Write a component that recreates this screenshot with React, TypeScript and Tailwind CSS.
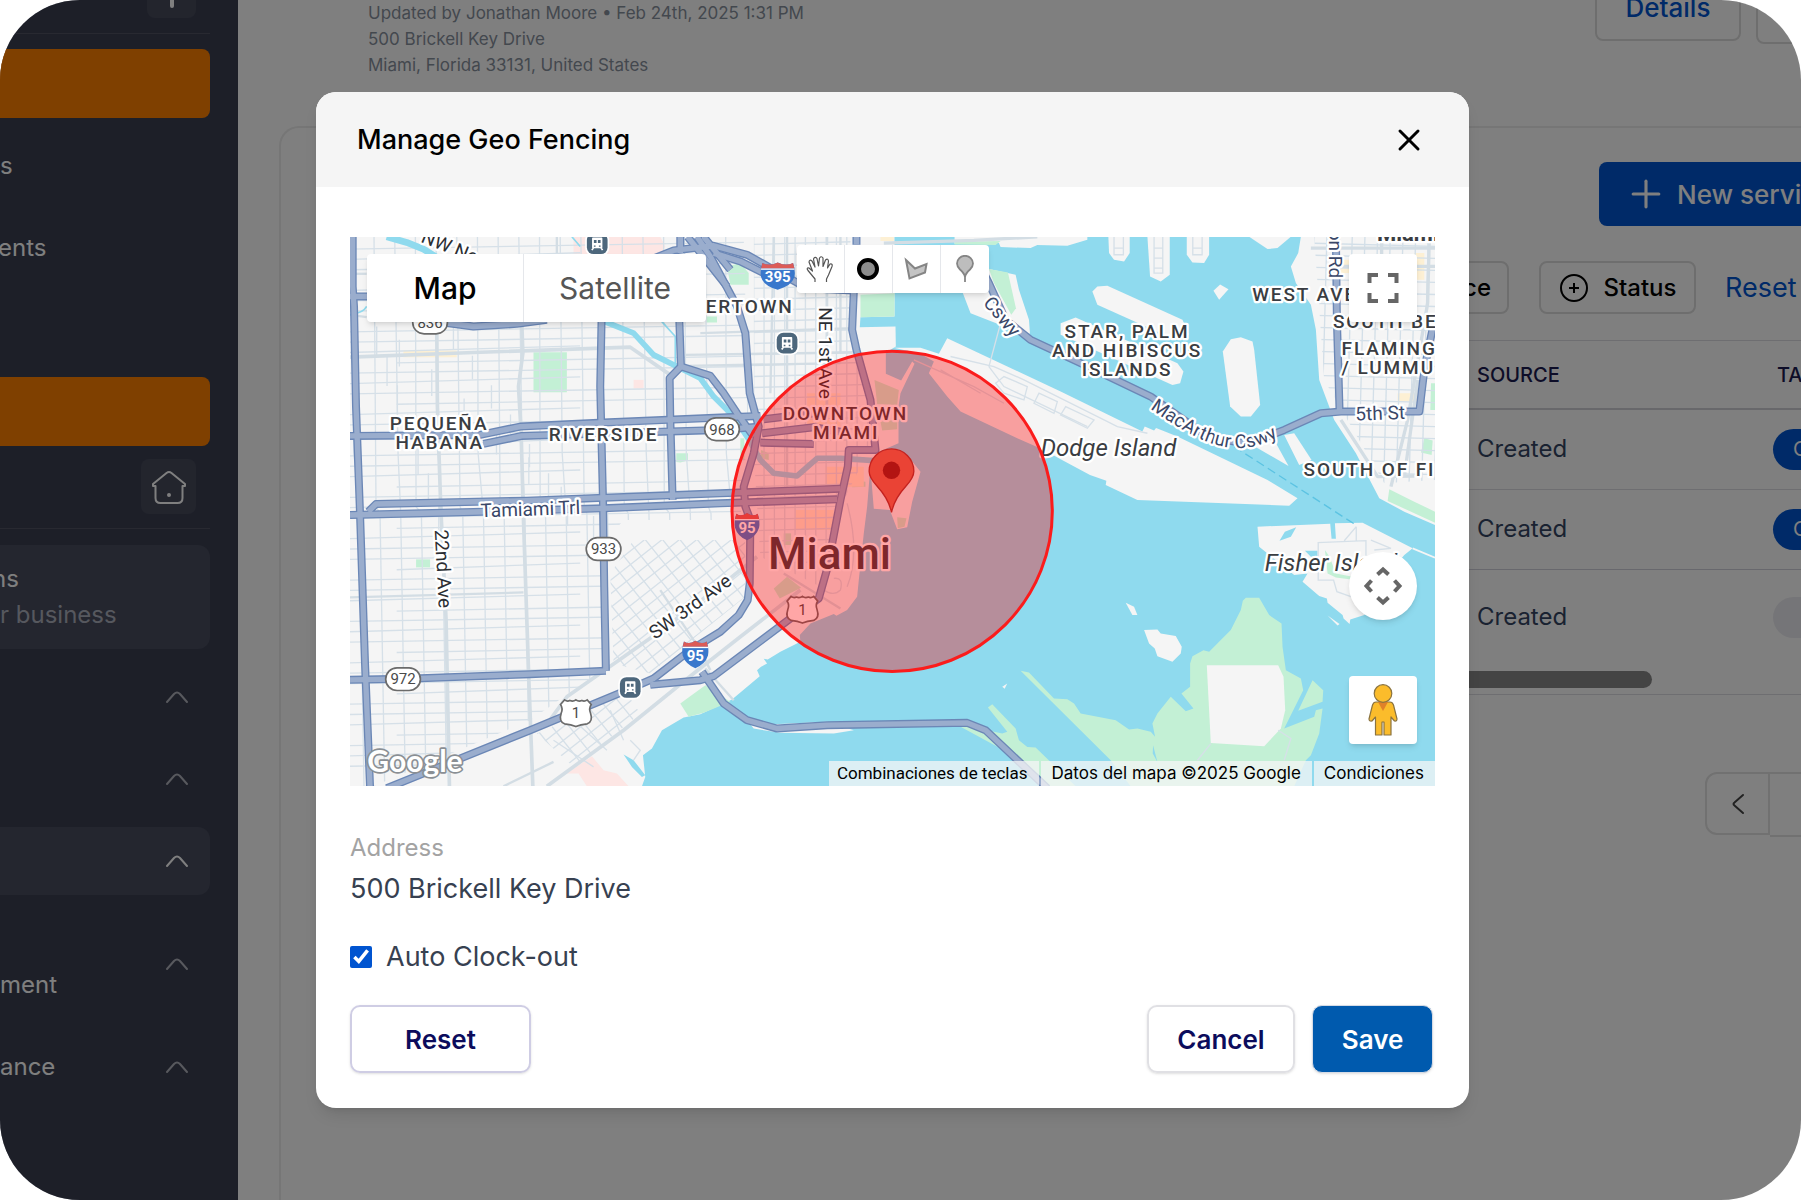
import { useState } from "react";
import { Plus, X } from "lucide-react";

// map drawing units: three per pixel
const MAINLAND =
  "M30 51 H1662 V290 L1560 292 L1558 322 L1665 320 L1666 380 L1636 398 V462 L1682 482 L1715 425 L1722 432 L1680 520 L1674 560 V670 L1610 698 L1590 735 L1580 860 L1570 940 L1555 1080 L1550 1130 L1520 1170 L1488 1187 L1480 1182 L1410 1210 L1378 1245 L1380 1265 L1320 1295 L1282 1318 L1270 1316 L1280 1330 L1262 1340 L1250 1350 L1258 1368 L1175 1438 L1080 1482 L1030 1492 L965 1530 L935 1585 L908 1605 L915 1670 L905 1698 H30 Z";

const ISLANDS = [
  // causeway and watson island
  "M1842 51 H2240 V60 L2180 78 L2090 76 L2070 85 L1980 82 L1975 70 L1842 72 Z",
  "M1850 150 L1945 148 L2025 165 L2035 210 L2065 300 L2068 342 L2030 335 L1890 280 L1865 215 Z",
  // port and dodge island
  "M1660 384 L1740 384 L1795 402 L1820 355 L2160 515 L2405 635 L2412 620 L2440 632 L2446 624 L2510 650 L2780 780 L2870 835 L2845 857 L2390 840 L2295 795 L2297 782 L2248 765 L2160 718 L2110 690 L2030 655 L1860 575 L1820 530 L1765 460 L1780 425 L1740 402 Z",
  // venetian islands
  "M2303 51 H2367 V100 L2350 125 L2320 120 L2305 100 Z",
  "M2420 51 H2487 V165 L2460 185 L2428 170 Z",
  "M2538 51 H2605 V105 L2590 130 L2555 128 L2538 105 Z",
  "M2725 51 H2850 L2810 85 L2780 88 Z",
  "M2255 215 L2270 200 L2300 198 L2525 300 L2545 345 L2470 345 L2270 255 Z",
  "M2160 310 L2205 293 L2510 430 L2528 455 L2518 490 L2495 495 L2160 345 Z",
  "M2646 395 L2670 358 L2700 352 L2735 365 L2740 390 L2758 555 L2730 590 L2700 590 L2668 560 Z",
  "M2618 213 L2638 194 L2663 208 L2635 240 Z",
  // miami beach
  "M2880 51 L2872 100 L2850 140 L2865 190 L2910 255 L2925 330 L2935 480 L2980 600 L3045 700 L3115 835 L3190 875 L3282 915 V51 Z",
  "M2690 650 L2800 660 L2843 738 Z",
  "M2830 645 L2860 640 L2912 720 L2875 735 Z",
  // fisher island
  "M2750 920 L2968 911 L2972 956 L2985 956 L2982 910 L3065 908 L3215 985 L3190 1005 L3160 1040 L3070 1185 L3028 1198 L3026 1212 L3008 1195 L3005 1185 L2960 1148 L2958 1135 L2935 1128 L2885 1085 L2900 1060 L2860 1065 L2755 980 Z",
  "M2960 1186 L2996 1212 L2990 1216 Z",
  // sand bars
  "M2355 1148 L2380 1160 L2390 1185 L2375 1185 Z",
  "M2410 1230 L2450 1228 L2460 1240 L2505 1248 L2523 1280 L2520 1300 L2495 1325 L2450 1308 L2442 1285 L2425 1270 Z",
  "M1985 1400 L2000 1390 L1992 1406 Z",
  "M1220 1500 L1300 1512 L1460 1505 L1540 1530 L1480 1540 L1320 1538 L1240 1525 Z",
  // brickell key
  "M1590 745 L1650 720 L1705 712 L1740 755 L1715 845 L1700 922 L1670 928 L1648 870 L1600 866 Z",
];

const PARKS = [
  "M580 397 H680 V517 H580 Z",
  "M1008 700 H1043 V722 L1020 728 L1008 726 Z",
  "M228 1018 H270 V1042 H228 Z",
  "M1020 1450 L1095 1395 L1170 1445 L1090 1478 L1045 1490 Z",
  "M1160 140 L1200 130 L1225 160 L1225 195 L1170 195 Z",
  "M1560 225 L1662 220 V290 L1560 292 Z",
  "M1098 290 H1130 V308 H1098 Z",
  "M1945 148 L2002 158 L2026 265 L2012 285 L1960 190 Z",
  "M1842 66 L1980 64 L1965 76 L1842 74 Z",
  "M1602 480 L1675 510 L1670 555 L1610 552 Z",
  "M1620 605 L1670 600 V628 L1625 632 Z",
  "M1300 1105 L1340 1070 L1382 1103 L1318 1135 Z",
  "M1535 780 L1575 785 V800 L1535 802 Z",
  "M1670 892 L1698 895 L1692 920 L1672 925 Z",
  "M1330 940 H1352 V975 H1330 Z",
  "M1262 690 L1285 700 L1285 720 L1262 715 Z",
  "M1200 655 H1212 V720 H1200 Z",
  "M3145 808 L3220 845 L3282 875 V908 L3140 843 Z",
  "M3250 655 L3275 662 L3272 705 L3240 698 Z",
  "M3270 490 H3282 V570 H3268 Z",
  "M2952 990 L2966 1010 L2985 1060 L3035 1070 L3030 1078 L2985 1072 L2960 1060 Z",
  // virginia key
  "M2715 1133 L2755 1133 L2785 1185 L2822 1210 L2825 1280 L2835 1350 L2880 1375 L2887 1410 L2830 1525 L2920 1490 L2925 1470 L2945 1465 L2935 1540 L2910 1605 L2895 1620 L2860 1698 H2370 L2310 1620 L2040 1352 L2065 1357 L2140 1435 L2180 1437 L2200 1450 L2220 1480 L2325 1500 L2365 1528 L2390 1525 L2430 1535 L2443 1550 L2435 1510 L2450 1480 L2490 1430 L2535 1473 L2558 1465 L2522 1420 L2548 1400 V1330 L2555 1308 L2588 1290 L2605 1295 L2670 1230 L2700 1170 L2706 1142 Z",
  "M2915 1380 L2947 1410 L2945 1445 L2872 1472 Z",
  "M1942 1462 L1955 1452 L2025 1525 L2035 1560 L2060 1580 L2085 1582 L2205 1698 H2130 L1980 1585 L1860 1520 L1872 1516 L1985 1540 L2000 1535 Z",
];

const BUSINESS = [
  "M190 392 H350 V412 H190 Z",
  "M1365 870 H1480 V930 H1365 Z",
  "M1400 520 H1500 V620 H1400 Z",
  "M1455 740 H1570 V800 H1455 Z",
  "M3000 120 H3090 V160 H3000 Z",
  "M3220 100 H3250 V180 H3220 Z",
  "M3170 520 H3240 V545 H3170 Z",
  "M1620 51 H1660 V64 H1620 Z",
];

const HOSPITAL = ["M700 51 H960 L975 80 L960 105 H700 Z", "M880 480 H910 V506 H880 Z", "M680 1660 L755 1608 L790 1650 L830 1660 L865 1698 H740 L715 1660 Z"];

const STREETS = [
  "M30 412 L400 398 L870 382 L990 465",
  "M290 320 L292 560 L302 860 L318 1200 L328 1698",
  "M545 310 L548 400 L535 500 L543 640 L550 900 L565 1350 L578 1698",
  "M30 1132 L550 1117",
  "M1080 340 L1540 325",
  "M1035 405 L1540 398",
  "M1035 438 L1500 430",
  "M1300 51 L1290 520",
  "M1340 51 L1340 800",
  "M1460 51 V560",
  "M1500 51 V400",
  "M30 162 H80",
  "M30 285 L80 292",
  "M650 51 V100",
  "M630 1498 L680 1430 L950 1240 L1150 1090 L1250 1010",
  "M620 1698 L850 1530 L1060 1360 L1200 1250 L1380 1110",
  "M490 1698 L640 1625",
  "M1330 1060 L1500 1165",
  "M1095 1345 L1180 1440",
  "M960 1110 L1080 1290 L1110 1350",
];

const BEACH_STREETS = [
  "M3000 600 L3110 770 L3220 768",
  "M3265 51 L3260 250 L3200 600 L3150 800",
  "M3122 51 V300",
  "M3230 480 L3190 770",
  "M2910 85 H3282",
  "M2985 140 H3282",
  "M1630 70 L1900 62 L2090 51",
];

const ROADS = [
  "M38 51 V200 L42 260 L48 560 L60 880 L75 1330 L90 1698",
  "M30 230 H90",
  "M310 308 L400 320 L530 312 L620 300",
  "M930 120 L1000 92 L1120 78 L1220 105 L1300 150 L1400 205 L1540 212",
  "M1020 51 V100 M1042 51 L1160 200 M1090 51 L1170 150",
  "M1120 100 L1200 125 L1280 165",
  "M784 300 L780 500 L788 830 L792 1100 L797 1352",
  "M1017 300 L1022 440 L988 475 L990 600 L997 840",
  "M30 648 L420 645 L540 620 L790 608 L1140 593 L1260 588",
  "M430 672 L545 648 L1140 630 L1260 620",
  "M1270 598 L1420 580",
  "M1265 640 L1420 622 L1525 640",
  "M1260 668 L1420 672",
  "M85 875 L108 852 L560 842 L1140 820 L1500 806",
  "M30 885 L400 876 L790 865 L1140 850 L1490 838",
  "M1022 440 L1110 468 L1150 520 L1190 580 L1240 650",
  "M1070 51 L1110 110 L1190 260 L1215 340 L1228 520 L1255 620 L1240 700 L1210 800 L1215 860 L1230 900 L1228 1090 L1222 1140 L1195 1185 L1140 1235 L1050 1290 L940 1375 L860 1410 L570 1530 L140 1704",
  "M1548 51 V75 M1540 215 L1535 330 L1548 390 L1590 540 L1605 690 L1525 690 L1522 740 L1500 840 L1462 1040 L1435 1135 L1350 1195 L1120 1368 L1080 1380 L930 1394",
  "M1085 1355 L1150 1450 L1220 1500 L1310 1525 L1460 1515 L1880 1508 L1935 1530 L2120 1704",
  "M30 1379 L200 1376 L570 1362 L797 1352",
  "M1925 150 L1945 190 L1995 300 L2070 360 L2220 430 L2430 530 L2600 650 L2720 672 L2830 630 L2940 580 L3000 575 L3235 575 L3250 450 L3282 290",
  "M2985 51 L2988 300 L2996 575",
];

const WIDE_STREETS = new Set([0, 1, 2, 14, 15]);

const range = (from: number, to: number, step: number) => {
  const out: number[] = [];
  for (let n = from; n < to; n += step) out.push(n);
  return out;
};

const CapsLabel = ({ x, y, children, start }: { x: number; y: number; children: string; start?: boolean }) => (
  <text x={x} y={y} textAnchor={start ? "start" : "middle"} className="text-[57px] font-medium tracking-widest">
    {children}
  </text>
);

const RouteOval = ({ x, y, label }: { x: number; y: number; label: string }) => (
  <g>
    <rect x={x - 52} y={y - 34} width={104} height={68} rx={34} fill="#fff" stroke="#6b6b6b" strokeWidth={5} />
    <text x={x} y={y + 16} textAnchor="middle" fill="#4a4a4a" className="text-[45px]">
      {label}
    </text>
  </g>
);

const Interstate = ({ x, y, w, label }: { x: number; y: number; w: number; label: string }) => (
  <g transform={`translate(${x} ${y})`}>
    <path
      d={`M${-w / 2 + 4} -38 Q${-w / 4} -28 0 -40 Q${w / 4} -28 ${w / 2 - 4} -38 Q${w / 2 + 4} -14 ${w / 2} 4 Q${w / 2 - 8} 30 0 42 Q${-w / 2 + 8} 30 ${-w / 2} 4 Q${-w / 2 - 4} -14 ${-w / 2 + 4} -38 Z`}
      fill="#3a78cc"
    />
    <path d={`M${-w / 2 + 4} -38 Q${-w / 4} -28 0 -40 Q${w / 4} -28 ${w / 2 - 4} -38 L${w / 2} -22 H${-w / 2} Z`} fill="#dc5b57" />
    <path d={`M${-w / 2} -20 H${w / 2}`} stroke="#fff" strokeWidth={4} />
    <text y={20} textAnchor="middle" fill="#fff" className="text-[45px] font-bold">
      {label}
    </text>
  </g>
);

const UsRoute = ({ x, y }: { x: number; y: number }) => (
  <g transform={`translate(${x} ${y})`}>
    <path
      d="M-34 -38 Q-26 -32 -18 -36 Q-8 -32 0 -38 Q8 -32 18 -36 Q26 -32 34 -38 L46 -24 Q38 -12 44 2 Q52 26 34 34 Q14 36 0 42 Q-14 36 -34 34 Q-52 26 -44 2 Q-38 -12 -46 -24 Z"
      fill="#fff"
      stroke="#6b6b6b"
      strokeWidth={5}
    />
    <text y={17} textAnchor="middle" fill="#4a4a4a" className="text-[45px]">
      1
    </text>
  </g>
);

const Station = ({ x, y }: { x: number; y: number }) => (
  <g transform={`translate(${x} ${y})`}>
    <rect x={-36} y={-36} width={72} height={72} rx={24} fill="#fff" />
    <rect x={-31} y={-31} width={62} height={62} rx={20} fill="#4d677c" />
    <path d="M-13 -16 H13 V11 H-13 Z M-16 19 L-10 10 M16 19 L10 10" fill="#fff" stroke="#fff" strokeWidth={5} strokeLinejoin="round" />
    <path d="M-10 -11 H-2 V-2 H-10 Z M2 -11 H10 V-2 H2 Z M-10 5 H-5 V9 H-10 Z M5 5 H10 V9 H5 Z" fill="#4d677c" />
  </g>
);

const MapDrawing = () => (
  <svg
    viewBox="30 51 3252 1647"
    preserveAspectRatio="xMidYMid slice"
    className="block h-[549px] w-full font-['Roboto',sans-serif]"
    role="img"
    aria-label="Miami"
  >
    <defs>
      <clipPath id="mainland">
        <path d={MAINLAND} />
      </clipPath>
      <clipPath id="grid-west">
        <path d="M60 51 H1210 L1225 600 L1200 900 H850 L800 960 V1340 L570 1500 L100 1698 H30 V51 Z" />
      </clipPath>
      <clipPath id="grid-diagonal">
        <path d="M810 1060 L880 960 H1215 V1130 L930 1360 L820 1330 Z M590 1540 L860 1420 L900 1480 L700 1640 Z" />
      </clipPath>
      <clipPath id="grid-downtown">
        <path d="M1240 51 H1530 V330 L1590 560 V680 L1500 860 L1440 1100 L1260 1010 L1240 700 Z" />
      </clipPath>
      <clipPath id="grid-beach">
        <path d="M2920 51 H3282 V780 L3130 790 L2950 480 Z" />
      </clipPath>
      <path id="macarthur" d="M2428 566 C2530 636 2620 692 2710 684 C2770 678 2810 654 2870 612" />
    </defs>

    <rect x={30} y={51} width={3252} height={1647} fill="#8fdaee" />
    <path d={MAINLAND} fill="#f5f5f5" />
    {ISLANDS.map((d) => (
      <path key={d} d={d} fill="#f5f5f5" />
    ))}
    {PARKS.map((d) => (
      <path key={d} d={d} fill="#c3f0d5" />
    ))}
    {BUSINESS.map((d) => (
      <path key={d} d={d} fill="#fdf0d4" />
    ))}
    {HOSPITAL.map((d) => (
      <path key={d} d={d} fill="#fde6e4" />
    ))}
    <path d="M2598 1335 H2812 L2828 1370 L2833 1470 L2820 1525 L2770 1578 L2610 1568 Z" fill="#f5f5f5" />
    <path d="M2816 962 L2832 935 L2866 922 L2850 950 Z M2892 992 H2930 V1010 H2910 Z" fill="#8fdaee" />
    <path d="M850 1603 L880 1620 L915 1665 L905 1670 L875 1640 Z M2400 1605 L2430 1640 M2437 1575 L2450 1625 L2436 1600 Z" fill="#8fdaee" />

    {/* small streets */}
    <g stroke="#d6e0e8" strokeWidth={4} fill="none" clipPath="url(#mainland)">
      <g clipPath="url(#grid-west)">
        {range(-20, 1200, 62).map((x, i) => (
          <path key={x} d={`M${x + 60} 51 L${x + 62 + (i % 3) * 4} ${i % 2 ? 860 : 700} L${x + 78} 880 L${x + 92} 1698`} />
        ))}
        {range(320, 860, 88).map((y, i) => (
          <path key={y} d={`M${110 + i * 31} ${y} V${y + 90} M${178 + i * 97} ${y + 40} V${y + 120} M${340 + i * 57} ${y} V${y + 70}`} />
        ))}
        {range(80, 1700, 31).map((y, i) => (
          <path key={y} d={`M${i % 4 === 3 ? 170 : 30} ${y + 8} L${i % 3 === 1 ? 720 : 1220} ${y - 12}`} />
        ))}
      </g>
      <g clipPath="url(#grid-diagonal)">
        {range(-900, 1800, 52).map((n) => (
          <path key={n} d={`M${n} 900 L${n + 640} 1700 M${n + 300} 1700 L${n + 1240} 960`} />
        ))}
      </g>
      <g clipPath="url(#grid-downtown)">
        {range(1240, 1600, 31).map((x) => (
          <path key={x} d={`M${x} 51 V1100`} />
        ))}
        {range(70, 1060, 33).map((y) => (
          <path key={y} d={`M1200 ${y + 5} L1600 ${y - 6}`} />
        ))}
      </g>
      <path d="M1480 1075 Q1510 1070 1500 1110 Q1480 1130 1450 1110 M1520 850 Q1560 1000 1520 1100 M810 1470 L850 1560 M870 1560 L900 1590 L880 1620 M640 1560 L760 1640 M700 1500 L800 1590" />
    </g>
    <g stroke="#d3dfe8" strokeWidth={4} fill="none" clipPath="url(#grid-beach)">
      {range(2900, 3290, 38).map((x) => (
        <path key={x} d={`M${x + 20} 51 L${x} 800`} />
      ))}
      {range(70, 800, 36).map((y) => (
        <path key={y} d={`M2900 ${y} L3282 ${y + 10}`} />
      ))}
    </g>
    {/* port yards */}
    <g stroke="#d6e0e8" strokeWidth={4} fill="none">
      <path d="M1830 410 L1960 440 L2050 480 L2290 600 L2330 620 L2420 640 M1980 310 L1945 440 L1990 500 L2240 620" />
      <path d="M1965 490 L1990 470 L2060 500 L2050 540 L1990 520 Z M2080 550 L2095 520 L2150 545 L2140 580 Z M2160 585 L2175 560 L2260 600 L2240 625 Z" />
      <path d="M1720 420 L1900 500 L1990 550 M1800 450 L1920 520" />
      <path d="M2320 51 V105 H2348 V51 M2320 85 H2348 M2440 51 V160 H2466 V51 M2440 85 H2466 M2440 115 H2466 M2440 145 H2466 M2556 51 V105 H2584 V51 M2556 85 H2584" />
      <path d="M2930 968 L3075 962 V1010 M2932 968 V1080 L2978 1080 L2988 1115 L3030 1130 M3046 920 L3010 962 M3090 960 L3150 985 L3100 990 M3046 920 V962" />
      <path d="M2570 1620 L2610 1570 M2812 1530 L2850 1555 L2830 1620" />
    </g>

    <g fill="none" stroke="#d3dde4" strokeLinejoin="round">
      {STREETS.map((d, i) => (
        <path key={d} d={d} strokeWidth={WIDE_STREETS.has(i) ? 11 : 7} />
      ))}
      {BEACH_STREETS.map((d) => (
        <path key={d} d={d} strokeWidth={10} />
      ))}
    </g>

    {/* river */}
    <g fill="none" stroke="#8fdaee" strokeLinejoin="round">
      <path d="M780 300 L880 340 L940 405 L1010 440 L1080 475 L1120 530 L1180 590 L1220 650 L1260 720 L1300 760 L1370 768 L1430 715 L1500 715 L1600 722" strokeWidth={17} />
      <path d="M140 51 L200 68 L250 88 L310 125" strokeWidth={20} />
      <path d="M960 300 L1005 350 V430 M695 51 L720 80" strokeWidth={5} />
      <path d="M30 285 Q70 280 80 260" strokeWidth={5} />
    </g>
    <path d="M3215 985 L3282 1013" stroke="#f5f5f5" strokeWidth={5} />
    <path d="M2680 680 L3045 915" stroke="#5cc3e2" strokeWidth={4} strokeDasharray="26 14" />

    <g fill="none" strokeLinejoin="round">
      {ROADS.map((d) => (
        <path key={d} d={d} stroke="#6b87b6" strokeWidth={24} />
      ))}
      {ROADS.map((d) => (
        <path key={d} d={d} stroke="#9aadcd" strokeWidth={16} />
      ))}
    </g>

    <Station x={771} y={72} />
    <Station x={1340} y={370} />
    <Station x={870} y={1402} />
    <RouteOval x={270} y={308} label="836" />
    <RouteOval x={1145} y={628} label="968" />
    <RouteOval x={790} y={987} label="933" />
    <RouteOval x={189} y={1377} label="972" />
    <Interstate x={1312} y={168} w={100} label="395" />
    <Interstate x={1065} y={1302} w={76} label="95" />
    <Interstate x={1220} y={919} w={72} label="95" />
    <UsRoute x={707} y={1477} />
    <UsRoute x={1386} y={1167} />

    <g fill="#3a3d42" stroke="#fff" strokeWidth={14} strokeLinejoin="round" paintOrder="stroke">
      <CapsLabel x={297} y={630}>PEQUEÑA</CapsLabel>
      <CapsLabel x={299} y={686}>HABANA</CapsLabel>
      <CapsLabel x={790} y={662}>RIVERSIDE</CapsLabel>
      <CapsLabel x={1096} y={279} start>ERTOWN</CapsLabel>
      <CapsLabel x={1515} y={600}>DOWNTOWN</CapsLabel>
      <CapsLabel x={1517} y={656}>MIAMI</CapsLabel>
      <CapsLabel x={2359} y={355}>STAR, PALM</CapsLabel>
      <CapsLabel x={2359} y={411}>AND HIBISCUS</CapsLabel>
      <CapsLabel x={2359} y={467}>ISLANDS</CapsLabel>
      <CapsLabel x={2734} y={245} start>WEST AVE</CapsLabel>
      <CapsLabel x={2976} y={326} start>SOUTH BE</CapsLabel>
      <CapsLabel x={3002} y={405} start>FLAMING</CapsLabel>
      <CapsLabel x={3002} y={461} start>/ LUMMU</CapsLabel>
      <CapsLabel x={2888} y={768} start>SOUTH OF FI</CapsLabel>
      <text x={3108} y={63} className="text-[66px] font-bold">Miami</text>
      <text x={1467} y={1047} textAnchor="middle" className="text-[132px] font-medium">Miami</text>
      <text x={2100} y={709} className="text-[72px] italic">Dodge Island</text>
      <text x={2772} y={1053} className="text-[72px] italic">Fisher Island</text>
      <g fill="#2b2e33" className="text-[57px]">
        <text transform="translate(1436 262) rotate(90)">NE 1st Ave</text>
        <text transform="translate(284 930) rotate(87)">22nd Ave</text>
        <text transform="translate(944 1260) rotate(-36)">SW 3rd Ave</text>
        <text transform="translate(240 66) rotate(22)">NW No</text>
      </g>
      <g fill="#3a4768" className="text-[57px]">
        <text transform="translate(422 892) rotate(-2)">Tamiami Trl</text>
        <text transform="translate(3044 602) rotate(-2)">5th St</text>
        <text transform="translate(2964 30) rotate(90)">on Rd</text>
        <text transform="translate(1926 250) rotate(50)">Cswy</text>
        <text>
          <textPath href="#macarthur">MacArthur Cswy</textPath>
        </text>
      </g>
    </g>

    <text
      x={82}
      y={1655}
      fill="#fff"
      stroke="#8a8f94"
      strokeWidth={10}
      strokeLinejoin="round"
      paintOrder="stroke"
      className="font-['Lato',sans-serif] text-[90px] font-bold"
    >
      Google
    </text>

    {/* fence */}
    <circle cx={1655} cy={874} r={480} fill="#ff0000" fillOpacity={0.35} stroke="#fb1c1c" strokeWidth={9} />
    <path
      d="M1653 877 Q1644 836 1610 799 Q1586 773 1586 754 A67 67 0 0 1 1720 754 Q1720 773 1696 799 Q1662 836 1653 877 Z"
      fill="#ea4335"
      stroke="#c5221f"
      strokeWidth={4}
    />
    <circle cx={1653} cy={751} r={26} fill="#b31412" />
  </svg>
);

const Caret = ({ active }: { active?: boolean }) => (
  <svg
    viewBox="0 0 24 14"
    className={active ? "mr-[21px] h-[14px] w-6 shrink-0 text-white" : "mr-[21px] h-[14px] w-6 shrink-0 text-[#b0b2bc]"}
    fill="none"
    stroke="currentColor"
    strokeWidth={2}
    strokeLinecap="round"
    aria-hidden="true"
  >
    <path d="M2 12 L9 4 Q12 1 15 4 L22 12" />
  </svg>
);

const Sidebar = () => (
  <aside className="w-[238px] shrink-0 overflow-hidden bg-[#3a3e50] pr-7 text-2xl text-white">
    <div className="flex h-[34px] justify-end border-b border-[#505362] pr-[14px]">
      <button className="flex h-[18px] w-[49px] justify-center rounded-b-lg bg-[#464a5b]" aria-label="Add">
        <span className="h-2 w-1 rounded-b bg-white" />
      </button>
    </div>
    <div className="mt-[15px] h-[69px] rounded-r-lg bg-[#ff8000]" />
    <nav>
      <a href="#" className="mt-[14px] flex h-[68px] items-center">
        s
      </a>
      <a href="#" className="-ml-[2px] mt-[14px] flex h-[68px] items-center">
        ents
      </a>
    </nav>
    <div className="mt-[95px] h-[69px] rounded-r-lg bg-[#ff8000]" />
    <div className="mt-[13px] flex h-[70px] items-start justify-end border-b border-[#505362] pr-[14px]">
      <button className="flex size-[55px] items-center justify-center rounded-lg bg-[#464a5b]" aria-label="Home">
        <svg viewBox="0 0 36 36" className="size-9" fill="none" stroke="#fff" strokeWidth={2} strokeLinejoin="round" strokeLinecap="round">
          <path d="M2 15 L15.500 4 Q18 2.200 20.500 4 L34 15 V17 H31.500 V29 Q31.500 34 26.500 34 H9.500 Q4.500 34 4.500 29 V17 H2 Z" />
          <circle cx={18} cy={26} r={1} fill="#fff" />
        </svg>
      </button>
    </div>
    <div className="-ml-2 mt-4 flex h-[104px] flex-col justify-center rounded-r-xl bg-[#484c5e]">
      <p className="leading-9">ns</p>
      <p className="ml-2 leading-9 text-[#adb0bd]">r business</p>
    </div>
    <div className="mt-[14px] flex h-[68px] items-center justify-end">
      <Caret />
    </div>
    <div className="mt-[14px] flex h-[68px] items-center justify-end">
      <Caret />
    </div>
    <div className="mt-[14px] flex h-[68px] items-center justify-end rounded-r-xl bg-[#484c5e]">
      <Caret active />
    </div>
    <div className="mt-[14px] flex h-[110px] items-center justify-between">
      <span className="pt-[42px]">ment</span>
      <Caret />
    </div>
    <div className="mt-[14px] flex h-[68px] items-center justify-between">
      <span>ance</span>
      <Caret />
    </div>
  </aside>
);

const JobPage = () => (
  <main className="min-w-0 flex-1 overflow-hidden bg-white">
    <header className="flex h-[126px] items-start justify-between pl-[130px]">
      <div className="text-[17px] leading-[26px] text-[#87909d]">
        <p>Updated by Jonathan Moore • Feb 24th, 2025 1:31 PM</p>
        <p>500 Brickell Key Drive</p>
        <p>Miami, Florida 33131, United States</p>
      </div>
      <div className="-mr-4 -mt-[26px] flex gap-[15px]">
        <button className="h-[67px] w-[146px] rounded-lg border-2 border-[#dcdcdc] text-[26px] font-medium text-[#0054d0]">
          Details
        </button>
        <button className="h-[70px] w-[61px] rounded-lg border-2 border-[#dcdcdc]" aria-label="More" />
      </div>
    </header>

    <section className="ml-[41px] h-[1100px] rounded-tl-[20px] border-l-2 border-t-2 border-[#ececec] pt-[34px]">
      <div className="flex justify-end">
        <button className="flex h-16 w-[202px] items-center gap-[9px] overflow-hidden whitespace-nowrap rounded-l-lg bg-[#0054d0] pl-[25px] text-[26px] font-medium text-white">
          <Plus size={44} strokeWidth={1.7} className="shrink-0" />
          New servi
        </button>
      </div>

      <div className="mt-[35px] flex h-[53px] justify-end text-2xl font-medium text-black">
        <button className="w-20 rounded-lg border-2 border-[#dcdcdc] pr-4 text-right">ce</button>
        <button className="ml-[30px] flex w-[157px] items-center justify-center gap-[15px] rounded-lg border-2 border-[#dcdcdc]">
          <svg viewBox="0 0 30 30" className="size-[30px]" fill="none" stroke="currentColor" strokeWidth={2} aria-hidden="true">
            <circle cx={15} cy={15} r={13} />
            <path d="M15 10 V20 M10 15 H20" />
          </svg>
          Status
        </button>
        <a href="#" className="ml-[29px] w-[76px] self-center text-[27px] font-normal text-[#0054d0]">
          Reset
        </a>
      </div>

      <div className="ml-20 mt-[26px] flex justify-end border-y border-[#dddde2]">
        <div className="w-[342px]">
          <table className="w-full table-fixed text-left text-2xl text-[#344563]">
            <thead>
              <tr className="h-[68px] border-b-2 border-[#d0d0d6] text-xl text-[#1a1a50]">
                <th className="w-[314px] pl-[18px] font-medium">SOURCE</th>
                <th className="pl-1 font-medium">TA</th>
              </tr>
            </thead>
            <tbody>
              <tr className="h-20 border-b border-[#dddde2]">
                <td className="pl-[18px]">Created</td>
                <td>
                  <span className="flex h-[41px] items-center rounded-l-full bg-[#0054d0] pl-5 text-xl text-white">C</span>
                </td>
              </tr>
              <tr className="h-20 border-b border-[#d0d0da]">
                <td className="pl-[18px]">Created</td>
                <td>
                  <span className="flex h-[41px] items-center rounded-l-full bg-[#0054d0] pl-5 text-xl text-white">C</span>
                </td>
              </tr>
              <tr className="h-24">
                <td className="pl-[18px]">Created</td>
                <td>
                  <span className="block h-[41px] rounded-l-full bg-[#ebebf0]" />
                </td>
              </tr>
            </tbody>
          </table>
          <div className="mb-[6px] mt-[6px] h-[17px] w-[193px] rounded-r-full bg-[#888]" />
        </div>
      </div>

      <div className="mt-[77px] flex items-start justify-end text-[#444]">
        <button className="flex h-[63px] w-[65px] items-center justify-center rounded-l-xl border-2 border-[#e2e2e2]" aria-label="Previous page">
          <svg viewBox="0 0 14 24" className="h-6 w-[14px]" fill="none" stroke="currentColor" strokeWidth={2} strokeLinecap="round" aria-hidden="true">
            <path d="M12 3 L3.500 10.500 Q1.500 12 3.500 13.500 L12 21" />
          </svg>
        </button>
        <div className="h-[65px] w-[31px] border-y-2 border-[#e2e2e2]" />
      </div>
    </section>
  </main>
);

const GeoMap = () => (
  <div className="relative overflow-hidden">
    <MapDrawing />

    <div className="absolute left-[17px] top-[17px] flex h-[68px] overflow-hidden rounded bg-white text-3xl shadow-md">
      <button className="w-[156px] font-medium text-black">Map</button>
      <button className="w-[183px] border-l border-gray-200 text-[#565656]">Satellite</button>
    </div>

    <div className="absolute left-1/2 top-2 flex h-12 -translate-x-1/2 divide-x divide-gray-200 overflow-hidden rounded-sm bg-white shadow-md">
      <button className="flex w-12 items-center justify-center" aria-label="Pan">
        <svg viewBox="0 0 28 28" className="size-7" fill="none" stroke="#555" strokeWidth={1.2} strokeLinejoin="round">
          <path d="M9 27 L9 24 L2 15.500 Q0 12.500 3 13 L6.500 16 L3 7 Q3.500 4 6 6 L9 12 L7.500 4 Q9 1 11 3.500 L12.500 11 L13.500 3 Q15.500 0.500 17 3 V11.500 L19.500 5 Q22 3 22.500 6 L21.500 13 L24 9 Q27 8.500 26 11.500 L22.500 20 L20.500 24 V27" />
        </svg>
      </button>
      <button className="flex w-12 items-center justify-center" aria-label="Draw circle">
        <span className="size-[22px] rounded-full border-4 border-black bg-[#8c8c8c]" />
      </button>
      <button className="flex w-12 items-center justify-center" aria-label="Draw polygon">
        <svg viewBox="0 0 24 24" className="size-6" fill="#c4c4c4" stroke="#858585" strokeWidth={2}>
          <path d="M2 3 L11 11.500 L22.500 7 L21 15.500 L5.500 21.500 Z" />
        </svg>
      </button>
      <button className="flex w-12 items-center justify-center" aria-label="Add marker">
        <svg viewBox="0 0 18 28" className="h-7 w-[18px]" fill="#bdbdbd" stroke="#858585" strokeWidth={1.8}>
          <path d="M9 27 V22 Q8.500 18.500 4 14.500 Q1 11.500 1 8.500 A8 7.700 0 0 1 17 8.500 Q17 11.500 14 14.500 Q9.500 18.500 9 22" />
        </svg>
      </button>
    </div>

    <button
      className="absolute right-[18px] top-[17px] flex size-[68px] items-center justify-center rounded bg-white shadow-md"
      aria-label="Fullscreen"
    >
      <svg viewBox="0 0 32 32" className="size-8" fill="none" stroke="#666" strokeWidth={4}>
        <path d="M2.500 11 V3 H11 M21 3 H29.500 V11 M29.500 21 V29 H21 M11 29 H2.500 V21" />
      </svg>
    </button>

    <div className="absolute bottom-[42px] right-[18px] flex flex-col gap-14">
      <button className="flex size-[68px] items-center justify-center rounded-full bg-white shadow-md" aria-label="Move map">
        <svg viewBox="0 0 40 40" className="size-10" fill="none" stroke="#666" strokeWidth={4}>
          <path d="M14.500 8.500 L20 3.500 L25.500 8.500 M14.500 31.500 L20 36.500 L25.500 31.500 M8.500 14.500 L3.500 20 L8.500 25.500 M31.500 14.500 L36.500 20 L31.500 25.500" />
        </svg>
      </button>
      <button className="flex size-[68px] items-center justify-center rounded bg-white shadow-md" aria-label="Street view">
        <svg viewBox="0 0 30 52" className="h-[52px] w-[30px]" fill="#fbbc2b" stroke="#8a7340" strokeWidth={1.2} strokeLinejoin="round">
          <path d="M8 18 H22 Q24.500 18 25.500 21 L29 35 Q29 37.500 26.500 37 L23 33 V51 H16 V38 H14 V51 H7.500 V33 L4 37 Q1 37.500 1 35 L4.500 21 Q5.500 18 8 18 Z" />
          <path d="M10 18 H20 L15 27 Z" fill="#e08129" stroke="none" />
          <circle cx={15} cy={9.500} r={8.800} />
        </svg>
      </button>
    </div>

    <div className="absolute bottom-0 right-0 flex h-[25px] items-center gap-[2px] text-[17px] leading-[25px] text-black">
      <button className="bg-[#f5f5f5]/75 pl-2 pr-[11px] font-['Roboto',sans-serif]">Combinaciones de teclas</button>
      <span className="bg-[#f5f5f5]/75 px-[11px]">Datos del mapa ©2025 Google</span>
      <a href="#" className="bg-[#f5f5f5]/75 pl-[10px] pr-[11px]">
        Condiciones
      </a>
    </div>
  </div>
);

const GeoFencingModal = () => {
  const [autoClockOut, setAutoClockOut] = useState(true);

  return (
    <div
      role="dialog"
      aria-labelledby="geo-title"
      className="w-full max-w-[1153px] overflow-hidden rounded-[20px] bg-white shadow-lg"
    >
      <div className="flex h-[95px] items-center justify-between bg-[#f5f5f5] pl-[41px] pr-[42px]">
        <h2 id="geo-title" className="text-[27px] font-medium leading-10 text-black">
          Manage Geo Fencing
        </h2>
        <button aria-label="Close" className="text-black">
          <X size={36} strokeWidth={2} />
        </button>
      </div>

      <div className="px-[34px] pb-[35px] pt-[50px]">
        <GeoMap />

        {/* Address */}
        <p className="mt-[46px] text-2xl text-[#a3a3a3]">Address</p>
        <p className="mt-[5px] text-[27px] leading-10 text-[#374151]">500 Brickell Key Drive</p>

        {/* Auto clock-out */}
        <label className="mt-7 flex h-10 items-center gap-[14px] text-[27px] text-[#374151]">
          <input
            type="checkbox"
            checked={autoClockOut}
            onChange={(e) => setAutoClockOut(e.target.checked)}
            className="size-[22px] accent-[#0054d0]"
          />
          Auto Clock-out
        </label>

        {/* Actions */}
        <div className="mt-7 flex h-[68px] gap-[17px] pr-[2px] text-[26px] font-semibold text-[#0c0c5c]">
          <button className="mr-auto w-[181px] rounded-[10px] border-2 border-[#cfcde4] shadow-sm">Reset</button>
          <button className="w-[148px] rounded-[10px] border-2 border-[#e0e0e4] shadow-sm">Cancel</button>
          <button className="w-[121px] rounded-[10px] border border-[#d5dbe6] bg-[#005aae] text-white shadow-sm">Save</button>
        </div>
      </div>
    </div>
  );
};

const App = () => {
  return (
    <div className="bg-white">
      <div className="relative flex h-screen overflow-hidden rounded-[80px] font-['Inter',sans-serif]">
        <Sidebar />
        <JobPage />
        <div className="absolute inset-0 flex items-center justify-center bg-black/50 pr-4">
          <GeoFencingModal />
        </div>
      </div>
    </div>
  );
};

export default App;
